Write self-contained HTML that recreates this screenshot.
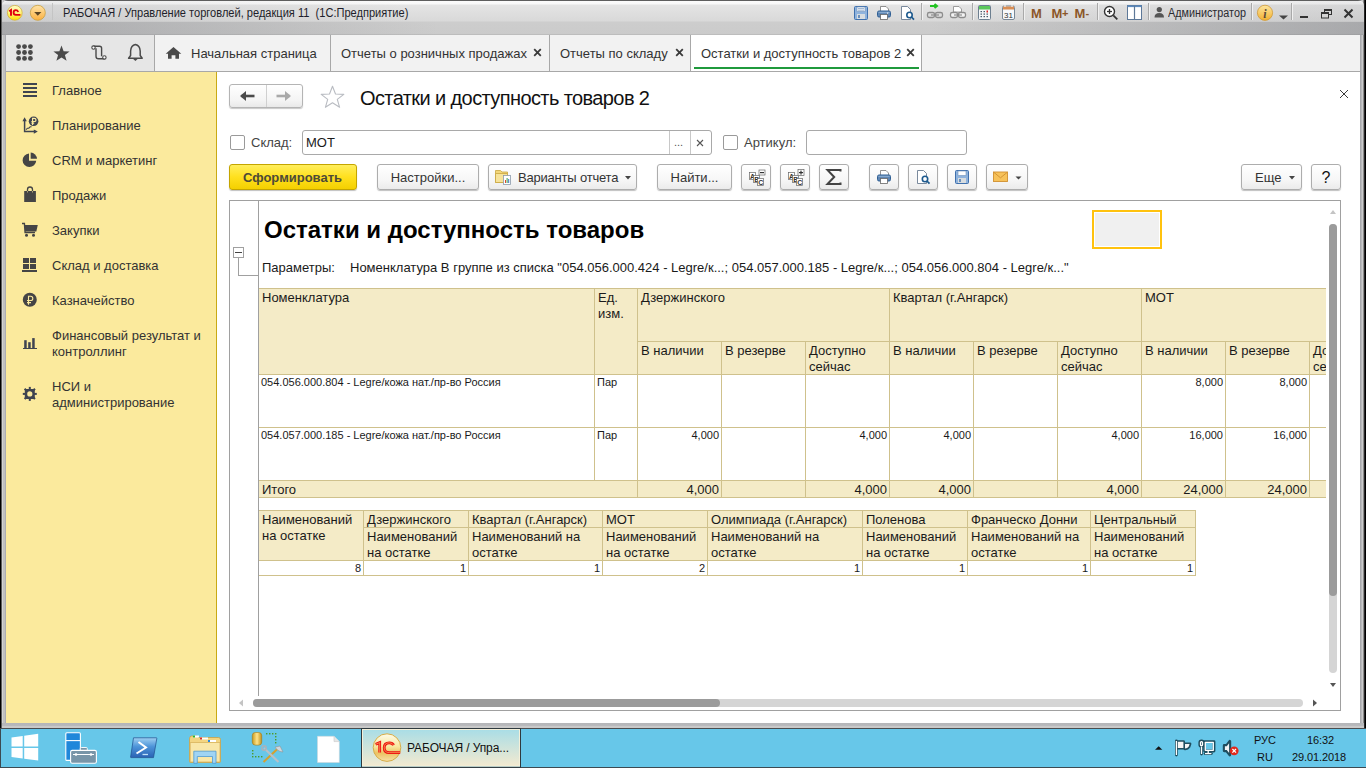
<!DOCTYPE html>
<html><head><meta charset="utf-8">
<style>
*{margin:0;padding:0;box-sizing:border-box}
html,body{width:1366px;height:768px;overflow:hidden;background:#67c7e9;font-family:"Liberation Sans",sans-serif;font-size:13px;color:#333}
.a{position:absolute}
.t{position:absolute;white-space:nowrap;line-height:16px}
/* window frame */
#frame{left:0;top:0;width:1366px;height:728px;background:linear-gradient(90deg,#000 0,#000 1px,#5e5e5e 1px,#5e5e5e 2px,#d3d3d3 2px,#d3d3d3 3px,#c0c0c0 3px,#c0c0c0 5px,#acadb2 5px,#acadb2 6px)}
#frameR{left:1360px;top:0;width:6px;height:728px;background:linear-gradient(90deg,#a8a9ac 0,#a8a9ac 1px,#b8b9bc 1px,#b8b9bc 2px,#cbcbcb 2px,#cbcbcb 3px,#8a8a8a 3px,#8a8a8a 4px,#282828 4px,#282828 5px,#000 5px)}
#frameB{left:2px;top:723px;width:1362px;height:5px;background:linear-gradient(180deg,#b4b5b8 0,#b9babd 3px,#c9c9c9 3px,#c9c9c9 5px)}
#tb{left:2px;top:0;width:1362px;height:35px;border-radius:6px 6px 0 0;overflow:hidden;
 background:linear-gradient(180deg,#5e5e5e 0,#5e5e5e 1px,#fbfbfb 1px,#f8f8f8 4px,#e4e4e4 5px,#d9d9d9 21px,#cdcdcd 22px,#cbcbcb 34px,#bdbdbd 34px)}
#tbshade{left:2px;top:22px;width:1362px;height:13px;background:linear-gradient(90deg,rgba(110,112,118,.38) 0,rgba(110,112,118,0) 32%,rgba(110,112,118,0) 68%,rgba(110,112,118,.38) 100%)}
#tbshade2{left:2px;top:1px;width:1362px;height:21px;border-radius:6px 6px 0 0;background:linear-gradient(90deg,rgba(110,112,118,.12) 0,rgba(110,112,118,0) 30%,rgba(110,112,118,0) 70%,rgba(110,112,118,.12) 100%)}
#ttl{left:63px;top:5px;font-size:12px;color:#1e1e2a;line-height:16px;transform:scaleX(0.922);transform-origin:0 0}
/* tab bar */
#tabbar{left:6px;top:35px;width:1354px;height:37px;background:#f2f2f2;border-bottom:1px solid #a8a8a8}
#tabicons{left:6px;top:35px;width:149px;height:36px;background:#e6e6e6;border-right:1px solid #a8a8a8}
.tab{position:absolute;top:35px;height:36px;border-right:1px solid #a8a8a8}
/* sidebar */
#side{left:6px;top:72px;width:211px;height:651px;background:#fbea9d;border-right:1px solid #c9aa14}
.si{color:#333;font-size:13px}
/* content */
#content{left:217px;top:72px;width:1143px;height:651px;background:#fff}
.btn{position:absolute;height:26px;border:1px solid #adadad;border-radius:3px;background:linear-gradient(#fff,#f7f7f7 60%,#ebebeb);box-shadow:0 1px 1px rgba(0,0,0,.25);color:#333;font-size:13px;line-height:26px;text-align:center;white-space:nowrap}
.inp{position:absolute;height:25px;border:1px solid #a9a9a9;border-radius:3px;background:#fff}
.chk{position:absolute;width:15px;height:15px;border:1px solid #9a9a9a;border-radius:2px;background:#fff}
/* spreadsheet */
#sheet{left:229px;top:200px;width:1112px;height:511px;border:1px solid #a0a0a0;background:#fff;overflow:hidden}
.c{position:absolute;background:#f4ebc7;}
.hl{position:absolute;background:#cdbf8a}
.d11{font-size:11px;color:#1a1a1a}
.d13{font-size:13px;color:#1a1a1a}
/* taskbar */
#task{left:0;top:728px;width:1366px;height:40px;background:#67c7e9;border-top:1px solid #4a4d50}
</style></head><body>
<div id="frame" class="a"></div>
<div id="frameR" class="a"></div>
<div id="tb" class="a"></div>
<div id="tbshade" class="a"></div>
<div id="tbshade2" class="a"></div>
<div id="ttl" class="t">РАБОЧАЯ / Управление торговлей, редакция 11&nbsp; (1С:Предприятие)</div>


<!-- title bar icons -->
<svg class="a" style="left:4px;top:2px" width="46" height="22" viewBox="4 2 46 22">
 <defs><linearGradient id="gy" x1="0" y1="0" x2="0" y2="1"><stop offset="0" stop-color="#fffccc"/><stop offset=".55" stop-color="#fff270"/><stop offset="1" stop-color="#ffe000"/></linearGradient>
 <linearGradient id="go" x1="0" y1="0" x2="0" y2="1"><stop offset="0" stop-color="#ffe4a8"/><stop offset="1" stop-color="#fbb040"/></linearGradient></defs>
 <circle cx="14.8" cy="12.8" r="7.4" fill="url(#gy)" stroke="#d2b040" stroke-width=".8"/>
 <path d="M9.2 11.2 L11 10 V15.8" stroke="#e00010" stroke-width="1.9" fill="none"/>
 <path d="M18.2 12 Q17.6 10.2 15.8 10.2 Q13.6 10.2 13.6 12.6 Q13.6 14.9 15.8 14.9 H20.4" stroke="#e00010" stroke-width="1.8" fill="none"/>
 <circle cx="37.8" cy="12.8" r="7.5" fill="url(#go)" stroke="#c9a040" stroke-width=".8"/>
 <path d="M34.2 12 L41.4 12 L37.8 15.8Z" fill="#5a4424"/>
</svg>
<div class="a" style="left:52px;top:3px;width:1px;height:17px;background:#c4c4c4"></div>


<!-- right title icons -->
<svg class="a" style="left:850px;top:3px" width="250" height="20" viewBox="850 3 250 20">
 <!-- save -->
 <rect x="854.5" y="6.5" width="13" height="13" rx="1" fill="#8fb3dd" stroke="#3f70ad"/>
 <rect x="857" y="7" width="8" height="4.5" fill="#fff" stroke="#6d8fba" stroke-width=".6"/>
 <line x1="858" y1="8.6" x2="864" y2="8.6" stroke="#6d8fba" stroke-width=".7"/>
 <line x1="858" y1="10.2" x2="864" y2="10.2" stroke="#6d8fba" stroke-width=".7"/>
 <rect x="857" y="14" width="8" height="5" fill="#d8dde0"/>
 <rect x="858.3" y="15" width="1.4" height="3" fill="#3f70ad"/>
 <!-- printer -->
 <path d="M880.5 6.5 H886 L888.5 9 V11.5 H880.5Z" fill="#fff" stroke="#777" stroke-width=".8"/>
 <rect x="877.5" y="11" width="13" height="6" rx="1.5" fill="#5f86b3" stroke="#2f5f94"/>
 <line x1="878.5" y1="12.3" x2="889.5" y2="12.3" stroke="#9fbede" stroke-width=".8"/>
 <rect x="880.5" y="14.5" width="7" height="5" fill="#fff" stroke="#666" stroke-width=".8"/>
 <rect x="887" y="12.6" width="1.2" height="1" fill="#fff"/>
 <!-- preview -->
 <path d="M901.5 6.5 H907.5 L910.5 9.5 V19.5 H901.5Z" fill="#fff" stroke="#6b7d92" stroke-width=".9"/>
 <circle cx="909.5" cy="15" r="2.7" fill="#fff" stroke="#1d5a8e" stroke-width="1.6"/>
 <line x1="911.4" y1="17" x2="914" y2="19.7" stroke="#1d5a8e" stroke-width="1.8"/>
 <!-- sep -->
 <line x1="921.5" y1="3" x2="921.5" y2="20" stroke="#a9a9a9"/>
 <line x1="922.5" y1="3" x2="922.5" y2="20" stroke="#f0f0f0"/>
 <!-- link green -->
 <path d="M930 6 H936.5 M934.5 4 L937 6 L934.5 8" stroke="#22c322" stroke-width="2" fill="none"/>
 <rect x="927.5" y="12.5" width="7" height="5" rx="1.8" fill="none" stroke="#8c8c8c" stroke-width="1.3"/>
 <rect x="935.5" y="12.5" width="7" height="5" rx="1.8" fill="none" stroke="#8c8c8c" stroke-width="1.3"/>
 <line x1="931" y1="15" x2="939" y2="15" stroke="#8c8c8c" stroke-width="1.2"/>
 <!-- link gray -->
 <path d="M953.5 6.5 H959 L961.5 9 V12 H953.5Z" fill="#fff" stroke="#888" stroke-width=".8"/>
 <rect x="950.5" y="12.5" width="7" height="5" rx="1.8" fill="#f4f4f4" stroke="#8c8c8c" stroke-width="1.3"/>
 <rect x="958.5" y="12.5" width="7" height="5" rx="1.8" fill="#f4f4f4" stroke="#8c8c8c" stroke-width="1.3"/>
 <line x1="954" y1="15" x2="962" y2="15" stroke="#8c8c8c" stroke-width="1.2"/>
 <!-- sep -->
 <line x1="972.5" y1="3" x2="972.5" y2="20" stroke="#a9a9a9"/>
 <line x1="973.5" y1="3" x2="973.5" y2="20" stroke="#f0f0f0"/>
 <!-- calculator -->
 <rect x="978.5" y="5.5" width="12" height="14" rx="1" fill="#f5f7f9" stroke="#6d7f90"/>
 <rect x="979" y="6" width="11" height="3.5" fill="#5cc85c"/>
 <g fill="#4a5a6a"><rect x="980.5" y="11" width="1.5" height="1.2"/><rect x="983.5" y="11" width="1.5" height="1.2"/><rect x="980.5" y="13.5" width="1.5" height="1.2"/><rect x="983.5" y="13.5" width="1.5" height="1.2"/><rect x="986.5" y="13.5" width="1.5" height="1.2"/><rect x="980.5" y="16" width="1.5" height="1.2"/><rect x="983.5" y="16" width="1.5" height="1.2"/><rect x="986.5" y="16" width="1.5" height="1.2"/></g>
 <rect x="986.5" y="10.5" width="1.5" height="2" fill="#e02020"/>
 <!-- calendar -->
 <rect x="1002.5" y="6" width="12" height="13.5" rx="1.5" fill="#f7f9fb" stroke="#7a8896"/>
 <rect x="1003" y="6.5" width="11" height="3" fill="#d98e55"/>
 <line x1="1005" y1="4.5" x2="1005" y2="7" stroke="#fff" stroke-width="1"/>
 <line x1="1012" y1="4.5" x2="1012" y2="7" stroke="#fff" stroke-width="1"/>
 <text x="1008.5" y="17.6" font-family="Liberation Sans" font-size="8" text-anchor="middle" fill="#333">31</text>
 <!-- sep -->
 <line x1="1023.5" y1="3" x2="1023.5" y2="20" stroke="#a9a9a9"/>
 <line x1="1024.5" y1="3" x2="1024.5" y2="20" stroke="#f0f0f0"/>
 <g font-family="Liberation Sans" font-weight="bold" font-size="13" fill="#8b5628">
  <text x="1031" y="17.7">M</text>
  <text x="1051.5" y="17.7">M</text><text x="1062" y="16.6" font-size="11">+</text>
  <text x="1074.5" y="17.7">M</text><text x="1085.5" y="16.6" font-size="11">-</text>
 </g>
 <line x1="1097.5" y1="3" x2="1097.5" y2="20" stroke="#a9a9a9"/>
 <line x1="1098.5" y1="3" x2="1098.5" y2="20" stroke="#f0f0f0"/>
</svg>
<svg class="a" style="left:1100px;top:3px" width="260" height="20" viewBox="1100 3 260 20">
 <!-- zoom -->
 <circle cx="1109.5" cy="11.5" r="5" fill="#fff" stroke="#333" stroke-width="1.4"/>
 <line x1="1107" y1="11.5" x2="1112" y2="11.5" stroke="#333" stroke-width="1.3"/>
 <line x1="1109.5" y1="9" x2="1109.5" y2="14" stroke="#333" stroke-width="1.3"/>
 <line x1="1113.3" y1="15.3" x2="1117.3" y2="19.3" stroke="#333" stroke-width="1.8"/>
 <!-- panels -->
 <rect x="1127.5" y="5.5" width="14" height="14" fill="#fff" stroke="#5d7898" stroke-width="1"/>
 <rect x="1127.5" y="5.5" width="14" height="1.6" fill="#5d8bc0"/>
 <line x1="1134.5" y1="6" x2="1134.5" y2="19" stroke="#5d7898" stroke-width="1.2"/>
 <line x1="1148.5" y1="3" x2="1148.5" y2="20" stroke="#a9a9a9"/>
 <line x1="1149.5" y1="3" x2="1149.5" y2="20" stroke="#f0f0f0"/>
 <!-- person -->
 <circle cx="1159.3" cy="9.6" r="2.6" fill="#555"/>
 <path d="M1154.5 17.5 Q1154.5 13 1159.3 13 Q1164 13 1164 17.5Z" fill="#555"/>
 <line x1="1251.5" y1="3" x2="1251.5" y2="20" stroke="#a9a9a9"/>
 <line x1="1252.5" y1="3" x2="1252.5" y2="20" stroke="#f0f0f0"/>
 <!-- info -->
 <defs><linearGradient id="gi" x1="0" y1="0" x2="0" y2="1"><stop offset="0" stop-color="#fde6a0"/><stop offset="1" stop-color="#f2b030"/></linearGradient></defs>
 <circle cx="1265" cy="12.8" r="7.6" fill="url(#gi)" stroke="#cf9a3a" stroke-width=".8"/>
 <text x="1265" y="17.5" font-family="Liberation Serif" font-style="italic" font-weight="bold" font-size="12" text-anchor="middle" fill="#5a4a3a">i</text>
 <path d="M1279 15.5 H1288 L1283.5 19.5Z" fill="#444"/>
 <line x1="1291.5" y1="3" x2="1291.5" y2="20" stroke="#a9a9a9"/>
 <line x1="1292.5" y1="3" x2="1292.5" y2="20" stroke="#f0f0f0"/>
 <!-- min -->
 <rect x="1300" y="16" width="8" height="2" fill="#333"/>
 <!-- restore -->
 <rect x="1324.5" y="9.5" width="7" height="5" fill="none" stroke="#333" stroke-width="1"/>
 <rect x="1324" y="9" width="8" height="2" fill="#333"/>
 <rect x="1321.5" y="12.5" width="7" height="5.5" fill="#d4d4d4" stroke="#333" stroke-width="1"/>
 <rect x="1321" y="12" width="8" height="2" fill="#333"/>
 <!-- close -->
 <path d="M1344.5 9.5 L1352.5 17.5 M1352.5 9.5 L1344.5 17.5" stroke="#333" stroke-width="2"/>
</svg>
<div class="t" style="left:1168px;top:5px;font-size:12px;color:#2a2a30;transform:scaleX(0.90);transform-origin:0 0">Администратор</div>

<div id="tabbar" class="a"></div>
<div id="tabicons" class="a"></div>


<!-- tab bar content -->
<svg class="a" style="left:6px;top:35px" width="180" height="36" viewBox="6 35 180 36">
 <g fill="#4a4a4a">
  <circle cx="18.6" cy="46.6" r="2.4"/><circle cx="24.5" cy="46.6" r="2.4"/><circle cx="30.4" cy="46.6" r="2.4"/>
  <circle cx="18.6" cy="52.5" r="2.4"/><circle cx="24.5" cy="52.5" r="2.4"/><circle cx="30.4" cy="52.5" r="2.4"/>
  <circle cx="18.6" cy="58.4" r="2.4"/><circle cx="24.5" cy="58.4" r="2.4"/><circle cx="30.4" cy="58.4" r="2.4"/>
 </g>
 <path d="M61.5 45.6 L63.6 51.3 L69.6 51.4 L64.9 55.1 L66.6 60.8 L61.5 57.4 L56.4 60.8 L58.1 55.1 L53.4 51.4 L59.4 51.3Z" fill="#4a4a4a"/>
 <path d="M93.3 46.2 H99.5 Q101.6 46.2 101.6 48.3 V56.3 M104.6 58.8 H98.6 Q96 58.8 96 56.2 V48.2" fill="none" stroke="#4a4a4a" stroke-width="1.4"/>
 <circle cx="93.5" cy="47.6" r="1.7" fill="#fff" stroke="#4a4a4a" stroke-width="1.1"/>
 <circle cx="104.4" cy="57.4" r="1.7" fill="#fff" stroke="#4a4a4a" stroke-width="1.1"/>
 <path d="M135.4 44.6 Q131 45.5 130.6 51 V55.5 L128.6 58.3 H142.2 L140.2 55.5 V51 Q139.8 45.5 135.4 44.6Z" fill="none" stroke="#4a4a4a" stroke-width="1.5" stroke-linejoin="round"/>
 <path d="M133.2 59 L135.4 61 L137.6 59Z" fill="#4a4a4a"/>
 <path d="M173.5 47 L181.3 53.8 H179 V58.8 H175.4 V55.3 H171.6 V58.8 H168 V53.8 H165.7Z" fill="#4a4a4a"/>
</svg>
<div class="t" style="left:191px;top:46px;color:#333">Начальная страница</div>
<div class="a" style="left:330px;top:35px;width:1px;height:36px;background:#a8a8a8"></div>
<div class="t" style="left:341px;top:46px;color:#333">Отчеты о розничных продажах</div>
<svg class="a" style="left:533px;top:48px" width="9" height="9"><path d="M1.2 1.2 L7.8 7.8 M7.8 1.2 L1.2 7.8" stroke="#3a3a3a" stroke-width="1.8"/></svg>
<div class="a" style="left:549px;top:35px;width:1px;height:36px;background:#a8a8a8"></div>
<div class="t" style="left:560px;top:46px;color:#333">Отчеты по складу</div>
<svg class="a" style="left:675px;top:48px" width="9" height="9"><path d="M1.2 1.2 L7.8 7.8 M7.8 1.2 L1.2 7.8" stroke="#3a3a3a" stroke-width="1.8"/></svg>
<div class="a" style="left:690px;top:35px;width:232px;height:36px;background:#fff;border-left:1px solid #a8a8a8;border-right:1px solid #a8a8a8"></div>
<div class="a" style="left:694px;top:67px;width:225px;height:2px;background:#1f9a3c"></div>
<div class="t" style="left:701px;top:46px;color:#333">Остатки и доступность товаров 2</div>
<svg class="a" style="left:906px;top:48px" width="9" height="9"><path d="M1.2 1.2 L7.8 7.8 M7.8 1.2 L1.2 7.8" stroke="#3a3a3a" stroke-width="1.8"/></svg>

<div id="side" class="a"></div>
<div id="content" class="a"></div>


<!-- form header -->
<div class="a" style="left:229px;top:84px;width:74px;height:24px;border:1px solid #b4b4b4;border-radius:3px;background:linear-gradient(#fff,#f4f4f4 70%,#e9e9e9);box-shadow:0 1px 1px rgba(0,0,0,.22)"></div>
<div class="a" style="left:266px;top:85px;width:1px;height:22px;background:#d0d0d0"></div>
<svg class="a" style="left:229px;top:84px" width="74" height="24" viewBox="229 84 74 24">
 <path d="M241.5 96 H254.5" stroke="#4a4a4a" stroke-width="2.6"/>
 <path d="M240 96 L246 91 V101Z" fill="#4a4a4a"/>
 <path d="M276.5 96 H289.5" stroke="#a9a9a9" stroke-width="2.6"/>
 <path d="M291 96 L285 91 V101Z" fill="#a9a9a9"/>
</svg>
<svg class="a" style="left:319px;top:84px" width="28" height="26" viewBox="319 84 28 26">
 <path d="M332.5 86.3 L335.5 94 L343.8 94.4 L337.3 99.4 L339.6 107.3 L332.5 102.7 L325.4 107.3 L327.7 99.4 L321.2 94.4 L329.5 94Z" fill="#fff" stroke="#b9bcc2" stroke-width="1.1" stroke-linejoin="round"/>
</svg>
<div class="t" style="left:360px;top:87px;font-size:20px;line-height:22px;letter-spacing:-0.6px;color:#111">Остатки и доступность товаров 2</div>
<svg class="a" style="left:1339px;top:89px" width="10" height="10"><path d="M1 1 L9 9 M9 1 L1 9" stroke="#3a3a3a" stroke-width="1"/></svg>

<!-- filter row -->
<div class="chk" style="left:230px;top:135px"></div>
<div class="t" style="left:251px;top:135px;color:#444">Склад:</div>
<div class="inp" style="left:302px;top:130px;width:410px"></div>
<div class="a" style="left:669px;top:131px;width:1px;height:23px;background:#c8c8c8"></div>
<div class="a" style="left:690px;top:131px;width:1px;height:23px;background:#c8c8c8"></div>
<div class="t" style="left:306px;top:135px;color:#1a1a1a">МОТ</div>
<div class="t" style="left:674px;top:134px;color:#555;font-size:11px">...</div>
<svg class="a" style="left:696px;top:139px" width="8" height="8"><path d="M1 1 L7 7 M7 1 L1 7" stroke="#555" stroke-width="1.1"/></svg>
<div class="chk" style="left:723px;top:135px"></div>
<div class="t" style="left:744px;top:135px;color:#444">Артикул:</div>
<div class="inp" style="left:806px;top:130px;width:161px"></div>

<!-- toolbar -->
<div class="a" style="left:229px;top:164px;width:128px;height:26px;border:1px solid #c4a500;border-radius:3px;background:linear-gradient(#ffee5c,#ffe01e 50%,#f4d000);box-shadow:0 1px 1px rgba(0,0,0,.25)"></div>
<div class="t" style="left:243px;top:170px;font-weight:bold;color:#4d4a38">Сформировать</div>
<div class="btn" style="left:377px;top:164px;width:102px">Настройки...</div>
<div class="btn" style="left:488px;top:164px;width:149px"></div>
<svg class="a" style="left:494px;top:168px" width="18" height="18" viewBox="494 168 18 18">
 <path d="M495.5 170.5 H500.5 L502 172 H507.5 V182.5 H495.5Z" fill="#f3d77a" stroke="#c9a640" stroke-width=".8"/>
 <path d="M495.5 173.5 H507.5 V182.5 H495.5Z" fill="#f7e39a" stroke="#c9a640" stroke-width=".8"/>
 <rect x="503.5" y="175.5" width="7" height="9" fill="#fff" stroke="#8a9aab" stroke-width=".8"/>
 <rect x="505" y="180" width="1" height="3" fill="#e04a2a"/><rect x="506.6" y="178" width="1" height="5" fill="#3aa050"/><rect x="508.2" y="179" width="1" height="4" fill="#3a70c0"/>
</svg>
<div class="t" style="left:518px;top:170px;color:#333;letter-spacing:-0.2px">Варианты отчета</div>
<svg class="a" style="left:625px;top:176px" width="6" height="4"><path d="M0 0 H6 L3 3.5Z" fill="#444"/></svg>
<div class="btn" style="left:657px;top:164px;width:75px">Найти...</div>
<div class="btn" style="left:741px;top:164px;width:30px"></div>
<div class="btn" style="left:780px;top:164px;width:30px"></div>
<div class="btn" style="left:819px;top:164px;width:30px"></div>
<div class="btn" style="left:869px;top:164px;width:30px"></div>
<div class="btn" style="left:908px;top:164px;width:30px"></div>
<div class="btn" style="left:947px;top:164px;width:30px"></div>
<div class="btn" style="left:986px;top:164px;width:42px"></div>
<svg class="a" style="left:741px;top:164px" width="290" height="26" viewBox="741 164 290 26">
 <!-- abc minus -->
 <g font-family="Liberation Sans" font-size="7" font-weight="bold" fill="#333">
  <rect x="749.5" y="172.5" width="6" height="7" fill="#fff" stroke="#666" stroke-width=".7"/>
  <text x="750" y="178.5">A</text>
  <rect x="753.5" y="175.5" width="6" height="7" fill="#fff" stroke="#666" stroke-width=".7"/>
  <text x="754.2" y="181.5">B</text>
  <rect x="757.5" y="178.5" width="6" height="7" fill="#fff" stroke="#666" stroke-width=".7"/>
  <text x="758.2" y="184.5">C</text>
  <rect x="759" y="170" width="6" height="5" fill="#fff" stroke="#666" stroke-width=".7"/>
  <rect x="760" y="172" width="4" height="1.2" fill="#333"/>
 </g>
 <g font-family="Liberation Sans" font-size="7" font-weight="bold" fill="#333">
  <rect x="788.5" y="172.5" width="6" height="7" fill="#fff" stroke="#666" stroke-width=".7"/>
  <text x="789" y="178.5">A</text>
  <rect x="792.5" y="175.5" width="6" height="7" fill="#fff" stroke="#666" stroke-width=".7"/>
  <text x="793.2" y="181.5">B</text>
  <rect x="796.5" y="178.5" width="6" height="7" fill="#fff" stroke="#666" stroke-width=".7"/>
  <text x="797.2" y="184.5">C</text>
  <rect x="798" y="169.5" width="6" height="6" fill="#fff" stroke="#666" stroke-width=".7"/>
  <rect x="799" y="172" width="4" height="1.2" fill="#333"/><rect x="800.4" y="170.6" width="1.2" height="4" fill="#333"/>
 </g>
 <path d="M840.5 171.5 V170 H827.5 L834.2 177 L827.5 184 H840.5 V182.5" fill="none" stroke="#444" stroke-width="2"/>
 <!-- print -->
 <path d="M880.5 170.5 H886 L888.5 173 V175.5 H880.5Z" fill="#fff" stroke="#777" stroke-width=".8"/>
 <rect x="877.5" y="175" width="13" height="6" rx="1.5" fill="#5f86b3" stroke="#2f5f94"/>
 <line x1="878.5" y1="176.3" x2="889.5" y2="176.3" stroke="#9fbede" stroke-width=".8"/>
 <rect x="880.5" y="178.5" width="7" height="5" fill="#fff" stroke="#666" stroke-width=".8"/>
 <!-- preview -->
 <path d="M917.5 170.5 H923.5 L926.5 173.5 V183.5 H917.5Z" fill="#fff" stroke="#6b7d92" stroke-width=".9"/>
 <circle cx="925" cy="179" r="2.7" fill="#fff" stroke="#1d5a8e" stroke-width="1.6"/>
 <line x1="926.9" y1="181" x2="929.5" y2="183.7" stroke="#1d5a8e" stroke-width="1.8"/>
 <!-- save -->
 <rect x="955.5" y="170.5" width="13" height="13" rx="1" fill="#8fb3dd" stroke="#3f70ad"/>
 <rect x="958" y="171" width="8" height="4.5" fill="#fff" stroke="#6d8fba" stroke-width=".6"/>
 <rect x="958" y="178" width="8" height="5" fill="#d8dde0"/>
 <rect x="959.3" y="179" width="1.4" height="3" fill="#3f70ad"/>
 <!-- mail -->
 <rect x="993.5" y="172" width="14" height="9.5" fill="#f7c25a" stroke="#d09030" stroke-width=".9"/>
 <path d="M993.8 172.3 L1000.5 177.8 L1007.2 172.3" fill="none" stroke="#d09030" stroke-width=".9"/>
 <path d="M1015.5 176.5 H1021.5 L1018.5 179.5Z" fill="#444"/>
</svg>
<div class="btn" style="left:1241px;top:164px;width:61px;text-align:left;padding-left:13px">Еще</div>
<svg class="a" style="left:1289px;top:176px" width="6" height="4"><path d="M0 0 H6 L3 3.5Z" fill="#444"/></svg>
<div class="btn" style="left:1311px;top:164px;width:30px;font-size:16px;color:#111">?</div>


<!-- spreadsheet -->
<div class="a" style="left:229px;top:200px;width:1112px;height:511px;border:1px solid #a0a0a0;background:#fff"></div>
<div class="a" style="left:230px;top:201px;width:1096px;height:494px;overflow:hidden">
<div class="a" style="left:-230px;top:-201px;width:1400px;height:700px;color:#1a1a1a">
<div class="t" style="left:264px;top:216px;font-size:24px;line-height:28px;font-weight:bold;color:#000">Остатки и доступность товаров</div>
<div class="t" style="left:262px;top:260px;color:#1a1a1a">Параметры:</div>
<div class="t" style="left:350px;top:260px;color:#1a1a1a">Номенклатура В группе из списка "054.056.000.424 - Legre/к...; 054.057.000.185 - Legre/к...; 054.056.000.804 - Legre/к..."</div>
<div class="a" style="left:259px;top:289px;width:1141px;height:85px;background:#f4ebc7"></div>
<div class="a" style="left:259px;top:481px;width:1141px;height:16px;background:#f4ebc7"></div>
<div class="a" style="left:259px;top:288px;width:1141px;height:1px;background:#cfc18c"></div>
<div class="a" style="left:637px;top:341px;width:763px;height:1px;background:#cfc18c"></div>
<div class="a" style="left:259px;top:374px;width:1141px;height:1px;background:#cfc18c"></div>
<div class="a" style="left:259px;top:427px;width:1141px;height:1px;background:#cfc18c"></div>
<div class="a" style="left:259px;top:480px;width:1141px;height:1px;background:#cfc18c"></div>
<div class="a" style="left:259px;top:497px;width:1141px;height:1px;background:#cfc18c"></div>
<div class="a" style="left:594px;top:288px;width:1px;height:192px;background:#cfc18c"></div>
<div class="a" style="left:637px;top:288px;width:1px;height:209px;background:#cfc18c"></div>
<div class="a" style="left:721px;top:341px;width:1px;height:156px;background:#cfc18c"></div>
<div class="a" style="left:805px;top:341px;width:1px;height:156px;background:#cfc18c"></div>
<div class="a" style="left:889px;top:288px;width:1px;height:209px;background:#cfc18c"></div>
<div class="a" style="left:973px;top:341px;width:1px;height:156px;background:#cfc18c"></div>
<div class="a" style="left:1057px;top:341px;width:1px;height:156px;background:#cfc18c"></div>
<div class="a" style="left:1141px;top:288px;width:1px;height:209px;background:#cfc18c"></div>
<div class="a" style="left:1225px;top:341px;width:1px;height:156px;background:#cfc18c"></div>
<div class="a" style="left:1309px;top:341px;width:1px;height:156px;background:#cfc18c"></div>
<div class="a" style="left:1393px;top:288px;width:1px;height:209px;background:#cfc18c"></div>
<div class="t" style="left:262px;top:290px;font-size:13px;">Номенклатура</div>
<div class="t" style="left:598px;top:290px;font-size:13px;">Ед.<br>изм.</div>
<div class="t" style="left:641px;top:290px;font-size:13px;">Дзержинского</div>
<div class="t" style="left:893px;top:290px;font-size:13px;">Квартал (г.Ангарск)</div>
<div class="t" style="left:1145px;top:290px;font-size:13px;">МОТ</div>
<div class="t" style="left:641px;top:343px;font-size:13px;">В наличии</div>
<div class="t" style="left:725px;top:343px;font-size:13px;">В резерве</div>
<div class="t" style="left:809px;top:343px;font-size:13px;">Доступно<br>сейчас</div>
<div class="t" style="left:893px;top:343px;font-size:13px;">В наличии</div>
<div class="t" style="left:977px;top:343px;font-size:13px;">В резерве</div>
<div class="t" style="left:1061px;top:343px;font-size:13px;">Доступно<br>сейчас</div>
<div class="t" style="left:1145px;top:343px;font-size:13px;">В наличии</div>
<div class="t" style="left:1229px;top:343px;font-size:13px;">В резерве</div>
<div class="t" style="left:1313px;top:343px;font-size:13px;">Доступно<br>сейчас</div>
<div class="t" style="left:261px;top:376px;font-size:11px;line-height:13px">054.056.000.804 - Legre/кожа нат./пр-во Россия</div>
<div class="t" style="left:597px;top:376px;font-size:11px;line-height:13px">Пар</div>
<div class="t" style="left:261px;top:429px;font-size:11px;line-height:13px">054.057.000.185 - Legre/кожа нат./пр-во Россия</div>
<div class="t" style="left:597px;top:429px;font-size:11px;line-height:13px">Пар</div>
<div class="t" style="left:1143px;top:376px;width:80px;text-align:right;font-size:11px;line-height:13px">8,000</div>
<div class="t" style="left:1227px;top:376px;width:80px;text-align:right;font-size:11px;line-height:13px">8,000</div>
<div class="t" style="left:639px;top:429px;width:80px;text-align:right;font-size:11px;line-height:13px">4,000</div>
<div class="t" style="left:807px;top:429px;width:80px;text-align:right;font-size:11px;line-height:13px">4,000</div>
<div class="t" style="left:891px;top:429px;width:80px;text-align:right;font-size:11px;line-height:13px">4,000</div>
<div class="t" style="left:1059px;top:429px;width:80px;text-align:right;font-size:11px;line-height:13px">4,000</div>
<div class="t" style="left:1143px;top:429px;width:80px;text-align:right;font-size:11px;line-height:13px">16,000</div>
<div class="t" style="left:1227px;top:429px;width:80px;text-align:right;font-size:11px;line-height:13px">16,000</div>
<div class="t" style="left:262px;top:482px;font-size:13px;">Итого</div>
<div class="t" style="left:639px;top:482px;width:80px;text-align:right;font-size:13px;">4,000</div>
<div class="t" style="left:807px;top:482px;width:80px;text-align:right;font-size:13px;">4,000</div>
<div class="t" style="left:891px;top:482px;width:80px;text-align:right;font-size:13px;">4,000</div>
<div class="t" style="left:1059px;top:482px;width:80px;text-align:right;font-size:13px;">4,000</div>
<div class="t" style="left:1143px;top:482px;width:80px;text-align:right;font-size:13px;">24,000</div>
<div class="t" style="left:1227px;top:482px;width:80px;text-align:right;font-size:13px;">24,000</div>
<div class="a" style="left:259px;top:511px;width:936px;height:49px;background:#f4ebc7"></div>
<div class="a" style="left:259px;top:510px;width:937px;height:1px;background:#cfc18c"></div>
<div class="a" style="left:363px;top:527px;width:833px;height:1px;background:#cfc18c"></div>
<div class="a" style="left:259px;top:560px;width:937px;height:1px;background:#cfc18c"></div>
<div class="a" style="left:259px;top:575px;width:937px;height:1px;background:#cfc18c"></div>
<div class="a" style="left:363px;top:510px;width:1px;height:65px;background:#cfc18c"></div>
<div class="a" style="left:468px;top:510px;width:1px;height:65px;background:#cfc18c"></div>
<div class="a" style="left:602px;top:510px;width:1px;height:65px;background:#cfc18c"></div>
<div class="a" style="left:707px;top:510px;width:1px;height:65px;background:#cfc18c"></div>
<div class="a" style="left:862px;top:510px;width:1px;height:65px;background:#cfc18c"></div>
<div class="a" style="left:967px;top:510px;width:1px;height:65px;background:#cfc18c"></div>
<div class="a" style="left:1090px;top:510px;width:1px;height:65px;background:#cfc18c"></div>
<div class="a" style="left:1195px;top:510px;width:1px;height:65px;background:#cfc18c"></div>
<div class="t" style="left:262px;top:512px;font-size:13px;">Наименований<br>на остатке</div>
<div class="t" style="left:367px;top:512px;font-size:13px;">Дзержинского</div>
<div class="t" style="left:367px;top:529px;font-size:13px;">Наименований<br>на остатке</div>
<div class="t" style="left:472px;top:512px;font-size:13px;">Квартал (г.Ангарск)</div>
<div class="t" style="left:472px;top:529px;font-size:13px;">Наименований на<br>остатке</div>
<div class="t" style="left:606px;top:512px;font-size:13px;">МОТ</div>
<div class="t" style="left:606px;top:529px;font-size:13px;">Наименований<br>на остатке</div>
<div class="t" style="left:711px;top:512px;font-size:13px;">Олимпиада (г.Ангарск)</div>
<div class="t" style="left:711px;top:529px;font-size:13px;">Наименований на<br>остатке</div>
<div class="t" style="left:866px;top:512px;font-size:13px;">Поленова</div>
<div class="t" style="left:866px;top:529px;font-size:13px;">Наименований<br>на остатке</div>
<div class="t" style="left:971px;top:512px;font-size:13px;">Франческо Донни</div>
<div class="t" style="left:971px;top:529px;font-size:13px;">Наименований на<br>остатке</div>
<div class="t" style="left:1094px;top:512px;font-size:13px;">Центральный</div>
<div class="t" style="left:1094px;top:529px;font-size:13px;">Наименований<br>на остатке</div>
<div class="t" style="left:321px;top:562px;width:40px;text-align:right;font-size:11px;line-height:13px">8</div>
<div class="t" style="left:426px;top:562px;width:40px;text-align:right;font-size:11px;line-height:13px">1</div>
<div class="t" style="left:560px;top:562px;width:40px;text-align:right;font-size:11px;line-height:13px">1</div>
<div class="t" style="left:665px;top:562px;width:40px;text-align:right;font-size:11px;line-height:13px">2</div>
<div class="t" style="left:820px;top:562px;width:40px;text-align:right;font-size:11px;line-height:13px">1</div>
<div class="t" style="left:925px;top:562px;width:40px;text-align:right;font-size:11px;line-height:13px">1</div>
<div class="t" style="left:1048px;top:562px;width:40px;text-align:right;font-size:11px;line-height:13px">1</div>
<div class="t" style="left:1153px;top:562px;width:40px;text-align:right;font-size:11px;line-height:13px">1</div>
<div class="a" style="left:1092px;top:210px;width:70px;height:39px;border:2px solid #ffc20e;background:#fff"></div>
<div class="a" style="left:1095px;top:213px;width:64px;height:33px;background:#f0f0f0"></div>
</div></div>
<div class="a" style="left:258px;top:201px;width:1px;height:495px;background:#a0a0a0"></div>
<div class="a" style="left:233px;top:247px;width:11px;height:11px;border:1px solid #a0a0a0;background:#fff"></div>
<div class="a" style="left:235px;top:252px;width:7px;height:1px;background:#444"></div>
<div class="a" style="left:238px;top:258px;width:1px;height:17px;background:#a0a0a0"></div>
<div class="a" style="left:238px;top:275px;width:20px;height:1px;background:#a0a0a0"></div>
<!-- v scroll -->
<svg class="a" style="left:1326px;top:201px" width="14" height="509" viewBox="1326 201 14 509">
 <path d="M1330 214 L1333 210 L1336 214Z" fill="#c4c4c4"/>
 <rect x="1329" y="224" width="8" height="449" rx="4" fill="#d5d5d5"/>
 <rect x="1329" y="224" width="8" height="372" rx="4" fill="#9b9b9b"/>
 <path d="M1330 683 L1336 683 L1333 687Z" fill="#555"/>
</svg>
<!-- h scroll -->
<svg class="a" style="left:230px;top:695px" width="1096" height="15" viewBox="230 695 1096 15">
 <path d="M243 699.5 L239 703 L243 706.5Z" fill="#c4c4c4"/>
 <rect x="253" y="699" width="1050" height="8" rx="4" fill="#d5d5d5"/>
 <rect x="253" y="699" width="467" height="8" rx="4" fill="#9b9b9b"/>
 <path d="M1313 699.5 L1317 703 L1313 706.5Z" fill="#555"/>
</svg>

<!-- sidebar content -->
<svg class="a" style="left:6px;top:72px" width="40" height="340" viewBox="6 72 40 340">
 <g fill="#3f4450">
  <rect x="23" y="83" width="14" height="2"/><rect x="23" y="87" width="14" height="2"/><rect x="23" y="91" width="14" height="2"/><rect x="23" y="95" width="14" height="2"/>
 </g>
 <!-- planning -->
 <g stroke="#3f4450" fill="none">
  <path d="M24.6 119.5 V131.6 H35.5" stroke-width="1.5"/>
  <path d="M22.4 121.2 L24.6 117.2 L26.8 121.2Z M33.8 129.4 L37.8 131.6 L33.8 133.8Z" fill="#3f4450" stroke="none"/>
  <path d="M26 129.6 L27.5 128.2 H28.8 L30.2 126.8 H31.6" stroke-width="1.1"/>
 </g>
 <circle cx="33.6" cy="121.3" r="4.8" fill="#3f4450"/>
 <path d="M32.6 124.9 V118.3 H34.3 Q36 118.3 36 119.9 Q36 121.5 34.3 121.5 H31.4 M31.4 123.2 H34.2" stroke="#fbea9d" stroke-width="1.2" fill="none"/>
 <!-- pie -->
 <path d="M29 153.5 A6.8 6.8 0 1 0 36.2 160.7 H29Z" fill="#454545"/>
 <path d="M30.7 152.4 A6.8 6.8 0 0 1 37 158.8 H30.7Z" fill="#454545"/>
 <!-- bag -->
 <rect x="24.2" y="191" width="11.7" height="11" fill="#454545"/>
 <path d="M27.5 192 V189.5 Q27.5 187 30 187 Q32.5 187 32.5 189.5 V192" fill="none" stroke="#454545" stroke-width="1.3"/>
 <path d="M27.5 191 V192.5 M32.5 191 V192.5" stroke="#fbea9d" stroke-width=".6"/>
 <!-- cart -->
 <path d="M22 223.5 H24.4 L25.1 232.5 H35" fill="none" stroke="#454545" stroke-width="1.4"/>
 <path d="M24.6 225 H37.8 L36.3 231.5 H25.1Z" fill="#454545"/>
 <circle cx="26.5" cy="235.3" r="1.5" fill="#454545"/><circle cx="33.5" cy="235.3" r="1.5" fill="#454545"/>
 <!-- warehouse -->
 <g fill="#454545"><rect x="23" y="258" width="6" height="5"/><rect x="30" y="258" width="6" height="5"/><rect x="23" y="264" width="6" height="5"/><rect x="30" y="264" width="6" height="5"/><rect x="22" y="270" width="15" height="2"/></g>
 <!-- ruble -->
 <circle cx="29.8" cy="299.7" r="7" fill="#454545"/>
 <path d="M28.5 304.8 V296.3 H30.7 Q32.8 296.3 32.8 298.4 Q32.8 300.5 30.7 300.5 H27 M27 302.6 H31" stroke="#fbea9d" stroke-width="1.1" fill="none"/>
 <!-- bars -->
 <g fill="#3f4450"><rect x="24.2" y="340.2" width="2.5" height="8.3"/><rect x="28.2" y="342.2" width="2.5" height="6.3"/><rect x="32.2" y="338.1" width="2.5" height="10.4"/><rect x="23" y="348" width="14" height="1"/></g>
 <!-- gear -->
 <g transform="translate(29.8 393.9)" fill="#3f4450">
  <path d="M-5 -5 H5 V5 H-5Z M-2.6 0 A2.6 2.6 0 1 0 2.6 0 A2.6 2.6 0 1 0 -2.6 0Z" fill-rule="evenodd"/>
  <rect x="-1" y="-7" width="2" height="3"/><rect x="-1" y="4" width="2" height="3"/><rect x="-7" y="-1" width="3" height="2"/><rect x="4" y="-1" width="3" height="2"/>
  <g transform="rotate(45)"><rect x="-1" y="-7.3" width="2" height="3"/><rect x="-1" y="4.3" width="2" height="3"/><rect x="-7.3" y="-1" width="3" height="2"/><rect x="4.3" y="-1" width="3" height="2"/></g>
 </g>
</svg>
<div class="t si" style="left:52px;top:83px">Главное</div>
<div class="t si" style="left:52px;top:118px">Планирование</div>
<div class="t si" style="left:52px;top:153px">CRM и маркетинг</div>
<div class="t si" style="left:52px;top:188px">Продажи</div>
<div class="t si" style="left:52px;top:223px">Закупки</div>
<div class="t si" style="left:52px;top:258px">Склад и доставка</div>
<div class="t si" style="left:52px;top:293px">Казначейство</div>
<div class="t si" style="left:52px;top:328px">Финансовый результат и<br>контроллинг</div>
<div class="t si" style="left:52px;top:379px">НСИ и<br>администрирование</div>

<div id="frameB" class="a"></div>

<div id="task" class="a"></div>

<!-- taskbar content -->
<div class="a" style="left:0;top:767px;width:1366px;height:1px;background:#3c4a52"></div>
<div class="a" style="left:0;top:728px;width:1px;height:40px;background:#3c4a52"></div>
<svg class="a" style="left:0;top:728px" width="560" height="40" viewBox="0 728 560 40">
 <!-- windows logo -->
 <path d="M11.5 737.4 L22.7 735.9 V746.4 H11.5Z M24.2 735.7 L38.2 733.8 V746.4 H24.2Z M11.5 747.9 H22.7 V758.5 L11.5 757Z M24.2 747.9 H38.2 V760.6 L24.2 758.7Z" fill="#fff"/>
 <!-- server manager -->
 <rect x="65.8" y="732.8" width="14.6" height="27.6" rx="1" fill="#1f87da" stroke="#fff" stroke-width="1.1"/>
 <line x1="66" y1="740.6" x2="80.2" y2="740.6" stroke="#fff" stroke-width="1.1"/>
 <rect x="80.3" y="747.5" width="7" height="3.4" rx="1" fill="#7895a8" stroke="#fff" stroke-width=".9"/>
 <rect x="70.6" y="750.4" width="25.8" height="12.8" rx="1.5" fill="#7895a8" stroke="#fff" stroke-width="1.1"/>
 <line x1="73" y1="754.5" x2="94" y2="754.5" stroke="#fff" stroke-width="1"/>
 <circle cx="76" cy="754.5" r="1.3" fill="#fff"/><circle cx="91" cy="754.5" r="1.3" fill="#fff"/>
 <!-- powershell -->
 <defs><linearGradient id="gps" x1="0" y1="0" x2="0" y2="1"><stop offset="0" stop-color="#9fd0f2"/><stop offset=".45" stop-color="#4c93d8"/><stop offset="1" stop-color="#2a62b4"/></linearGradient>
 <linearGradient id="gdb" x1="0" y1="0" x2="1" y2="0"><stop offset="0" stop-color="#c99a1e"/><stop offset=".5" stop-color="#ffe48a"/><stop offset="1" stop-color="#c0901a"/></linearGradient>
 <linearGradient id="gtb" x1="0" y1="0" x2="0" y2="1"><stop offset="0" stop-color="#a9dde6"/><stop offset="1" stop-color="#f3ead0"/></linearGradient>
 <linearGradient id="g1c" x1="0" y1="0" x2="0" y2="1"><stop offset="0" stop-color="#fffbe8"/><stop offset=".45" stop-color="#f8e8a0"/><stop offset=".7" stop-color="#ecc262"/><stop offset="1" stop-color="#f7e2a8"/></linearGradient></defs>
 <path d="M133.5 737.8 H156.5 Q157 737.8 156.8 738.5 L153.5 757.6 H131 Q130.5 757.6 130.6 757 Z" fill="url(#gps)" stroke="#1e4e8c" stroke-width=".7"/>
 <path d="M138.5 742 L146 747.5 L136.5 753.5" fill="none" stroke="#fff" stroke-width="2"/>
 <line x1="142.5" y1="754.5" x2="148" y2="754.5" stroke="#bfe0f8" stroke-width="1.3"/>
 <!-- explorer -->
 <path d="M189.5 739 Q189.5 736 191.5 736 H197 L198.5 737.5 H218.5 Q220.5 737.5 220.5 739.5 V761.5 Q220.5 762.5 219.5 762.5 H190.5 Q189.5 762.5 189.5 761.5Z" fill="#f3d581" stroke="#c9a247" stroke-width=".8"/>
 <rect x="193" y="735.5" width="6" height="2" fill="#fff"/><rect x="193" y="735.5" width="2" height="2" fill="#2bb530"/>
 <rect x="200" y="737.5" width="8" height="2" fill="#fff"/><rect x="200" y="737.5" width="2" height="2" fill="#d8302a"/>
 <rect x="208" y="740" width="8" height="2" fill="#fff"/><rect x="208" y="740" width="2" height="2" fill="#2a8ae0"/>
 <path d="M190.2 742.5 H220 V762 H190.2Z" fill="#f9e7a8" stroke="#d4ae55" stroke-width=".7"/>
 <path d="M193.8 751.2 H216 V763.3 H212.5 V756.5 H197.3 V763.3 H193.8Z" fill="#9fd4f4" stroke="#4c9ad4" stroke-width=".8"/>
 <!-- db tools -->
 <g fill="#4e9a2a"><rect x="266" y="733" width="1.4" height="1.4"/><rect x="269" y="733" width="1.4" height="1.4"/><rect x="272" y="733" width="1.4" height="1.4"/><rect x="275" y="733" width="1.4" height="1.4"/>
 <rect x="275" y="736" width="1.4" height="1.4"/><rect x="275" y="739" width="1.4" height="1.4"/><rect x="275" y="742" width="1.4" height="1.4"/>
 <rect x="252" y="750" width="1.4" height="1.4"/><rect x="252" y="753" width="1.4" height="1.4"/><rect x="252" y="756" width="1.4" height="1.4"/><rect x="255" y="756" width="1.4" height="1.4"/><rect x="258" y="756" width="1.4" height="1.4"/><rect x="261" y="756" width="1.4" height="1.4"/></g>
 <rect x="252.3" y="732.5" width="9.4" height="12.6" rx="3" fill="url(#gdb)" stroke="#a87a10" stroke-width=".6"/>
 <path d="M263.5 762 L279 747.5" stroke="#d4a030" stroke-width="2"/>
 <path d="M264 748 L278.5 762" stroke="#b8c0c8" stroke-width="2.2"/>
 <path d="M275 747.2 L280 746 L283 752 L280 751.5 L277.5 750Z" fill="#d0d6dc" stroke="#888" stroke-width=".5"/>
 <circle cx="264" cy="748" r="2.2" fill="none" stroke="#aab2ba" stroke-width="1.4"/>
 <!-- file -->
 <path d="M317.5 736.3 H334 L339.3 741.6 V762.5 H317.5Z" fill="#fff" stroke="#d0d6da" stroke-width=".6"/>
 <path d="M334 736.3 V741.6 H339.3" fill="#e6e6e6" stroke="#c8c8c8" stroke-width=".6"/>
 <!-- active 1C button -->
 <rect x="361.5" y="728.5" width="159" height="38.6" fill="none" stroke="#2f3a3f" stroke-width="1"/>
 <rect x="362.5" y="729.5" width="157" height="36.6" fill="url(#gtb)" stroke="#f4f0da" stroke-width="1"/>
 <circle cx="387" cy="747.6" r="13.8" fill="url(#g1c)" stroke="#d6ac48" stroke-width="1"/>
 <g fill="none" stroke-linejoin="miter">
 <path d="M375.6 744.3 L379.7 742.6 V752.6" stroke="#ee1010" stroke-width="2.8"/>
 <path d="M375.6 744.3 L379.7 742.6 V752.6" stroke="#f7b060" stroke-width=".7"/>
 <path d="M393.6 745.2 Q392.5 742.8 389.3 742.8 Q384.2 742.8 384.2 747.7 Q384.2 752.6 389.3 752.6 H400.2" stroke="#ee1010" stroke-width="2.8"/>
 <path d="M393.6 745.2 Q392.5 742.8 389.3 742.8 Q384.2 742.8 384.2 747.7 Q384.2 752.6 389.3 752.6 H400.2" stroke="#f7b060" stroke-width=".7"/>
 </g>
</svg>
<div class="t" style="left:407px;top:740px;font-size:12px;color:#111;letter-spacing:-0.1px">РАБОЧАЯ / Упра...</div>
<svg class="a" style="left:1150px;top:735px" width="95" height="28" viewBox="1150 735 95 28">
 <path d="M1155 749.8 L1158.7 746.3 L1162.3 749.8Z" fill="#111"/>
 <g stroke="#1f4d5e" stroke-width="2.8" fill="#1f4d5e" stroke-linejoin="round" stroke-linecap="round">
  <path d="M1176.4 741 V755"/>
  <path d="M1177.6 741.6 H1183.6 V748.2 H1177.6Z M1184.8 743.8 H1190 L1189 746.8 Q1187.5 749 1184.8 748.8Z"/>
  <rect x="1199.8" y="741" width="3.4" height="5.4" rx="1.6"/><path d="M1201.5 746.5 V754"/>
  <rect x="1204.6" y="741.6" width="9.4" height="9.4" fill="none"/><path d="M1205 753.6 H1211.4"/>
  <path d="M1224.2 745.5 H1226.6 L1229.8 741.3 V755 L1226.6 750.8 H1224.2Z"/>
 </g>
 <g stroke="#fff" stroke-width="1.3" fill="none" stroke-linejoin="round">
  <path d="M1176.4 741 V755"/>
  <rect x="1200.5" y="741.7" width="2" height="4" rx=".9"/><path d="M1201.5 746.5 V754"/>
  <rect x="1205.3" y="742.3" width="8" height="8"/><path d="M1205 753.6 H1211.4 M1208.2 751 V753.6"/>
 </g>
 <path d="M1177.8 741.8 H1183.4 V748 H1177.8Z M1185 744 H1189.6 L1188.8 746.6 Q1187.4 748.6 1185 748.6Z" fill="#f4f4f4"/>
 <path d="M1224.9 746.2 H1226.8 L1229.1 743.2 V753 L1226.8 750.1 H1224.9Z" fill="#f4f4f4"/>
 <circle cx="1234.2" cy="750.8" r="4.4" fill="#e0281c"/>
 <path d="M1232.4 749 L1236 752.6 M1236 749 L1232.4 752.6" stroke="#fff" stroke-width="1.3"/>
</svg>
<div class="t" style="left:1254px;top:732px;font-size:11px;color:#111">РУС</div>
<div class="t" style="left:1257px;top:749px;font-size:11px;color:#111">RU</div>
<div class="t" style="left:1307px;top:732px;font-size:11px;letter-spacing:-0.1px;color:#111">16:32</div>
<div class="t" style="left:1292px;top:749px;font-size:11px;letter-spacing:-0.1px;color:#111">29.01.2018</div>

</body></html>
